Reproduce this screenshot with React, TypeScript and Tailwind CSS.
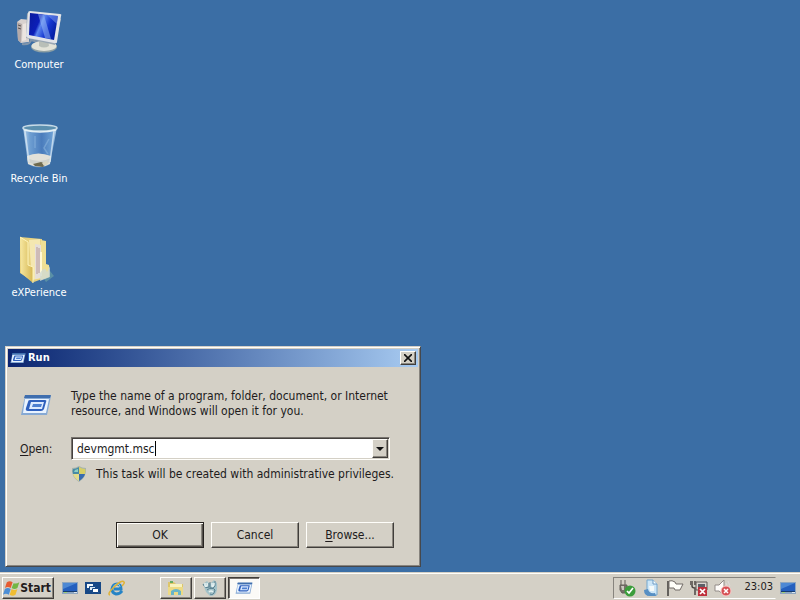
import { useState } from "react";
import type { ReactNode } from "react";

const raised =
  "border border-t-[#fffefa] border-l-[#fffefa] border-r-[#403d3a] border-b-[#403d3a] shadow-[inset_-1px_-1px_0_#8a867e]";

function ComputerIcon() {
  return (
    <svg viewBox="0 0 48 48" className="size-12" aria-hidden="true">
      <defs>
        <linearGradient id="screen" x1="0" y1="0" x2="1" y2="0.4">
          <stop offset="0" stopColor="#0a1a9c" />
          <stop offset="0.4" stopColor="#0c1fb8" />
          <stop offset="0.5" stopColor="#5a84ee" />
          <stop offset="0.75" stopColor="#1436d0" />
          <stop offset="1" stopColor="#0620a8" />
        </linearGradient>
      </defs>
      <path d="M2 14 6 11 16 12 14 34 6 35 3 32z" fill="#d9d2cf" />
      <path d="M2 14 7 16 6 35 3 32z" fill="#b4aaa9" />
      <path d="M8 16 12 15 11 32 7 33z" fill="#ece5e0" />
      <path d="M3 17l3 1M3 20l3 1" stroke="#5c5450" />
      <path d="M7 36q8 1 9-4l7 2q-4 2-5 5" fill="none" stroke="#8195ab" strokeWidth="2" />
      <ellipse cx="29" cy="39" rx="13" ry="5.5" fill="#8ea0a4" />
      <ellipse cx="29" cy="38" rx="12.5" ry="5" fill="#e3e3d8" />
      <path d="M24 32h9l1 6q-5 3-10 0z" fill="#b9bfb8" />
      <path d="M14 6 12 5 11 30 40 37 46 11z" fill="#9aa7b4" />
      <path d="M13 5Q13 3 15 3L45 6Q47 6 46 8L42 34Q42 36 39 35L13 30Q11 29 11 28z" fill="#e2e4e8" />
      <path d="M15 5 43 8 39 32 14 27z" fill="url(#screen)" />
      <path d="M23 6 29 7 36 31 30 30z" fill="#9bc0fa" opacity="0.5" />
      <path d="M32 7 43 8 42 16z" fill="#7fa0f0" opacity="0.5" />
    </svg>
  );
}

function RecycleIcon() {
  return (
    <svg viewBox="0 0 48 48" className="size-12" aria-hidden="true">
      <defs>
        <linearGradient id="bin" x1="0" y1="0" x2="1" y2="0">
          <stop offset="0" stopColor="#b5d2ec" />
          <stop offset="0.2" stopColor="#6f9fd2" />
          <stop offset="0.55" stopColor="#4a7cbc" />
          <stop offset="0.85" stopColor="#6a9dd2" />
          <stop offset="1" stopColor="#b8d3e8" />
        </linearGradient>
      </defs>
      <path d="M8 5 13 42Q25 49 35 42L42 5z" fill="url(#bin)" />
      <path d="M12 34Q23 29 36 34L35 42Q25 48 13 42z" fill="#e3e1d9" />
      <path d="M12 36q12 6 24 0l-1 4q-10 6-22 0z" fill="#cfd2cd" />
      <path d="M18 42l8-2 5 2-3 3-8-1z" fill="#6f6b50" />
      <path d="M27 41l5-2 1 3-4 2z" fill="#d9d6c1" />
      <path d="M34 17 29 26 33 32M20 14v12" fill="none" stroke="#88b2dc" strokeWidth="1.5" opacity="0.6" />
      <path d="M10 9 14 40M39 9 35 40" fill="none" stroke="#e0edf5" strokeWidth="1.5" opacity="0.7" />
      <ellipse cx="25" cy="6" rx="17" ry="3" fill="#5b8fae" stroke="#c8dbe7" strokeWidth="1.5" />
      <path d="M9 8q16 4 32 0" fill="none" stroke="#e4f0f5" strokeWidth="1.5" />
    </svg>
  );
}

function FolderIcon() {
  return (
    <svg viewBox="0 0 48 48" className="size-12" aria-hidden="true">
      <defs>
        <linearGradient id="folder" x1="0" y1="0" x2="1" y2="0">
          <stop offset="0" stopColor="#f7e8a2" />
          <stop offset="1" stopColor="#d5b652" />
        </linearGradient>
      </defs>
      <path d="M27 40 35 35 39 40 31 46z" fill="#6fa6a7" opacity="0.6" />
      <path d="M5 1 27 3 27 43 19 46 5 37z" fill="#e7d17e" />
      <path d="M14 4 25 3 27 42 17 44z" fill="#f4e7b1" />
      <path d="M20 8 26 9 29 41 20 43z" fill="#e5ded9" />
      <path d="M22 11v27M24 12v25" stroke="#b69896" />
      <path d="M26 4 31 5 31 28 34 29 34 41 26 44z" fill="#eedf94" />
      <path d="M26 16v24" stroke="#fff8d5" strokeWidth="2" />
      <path d="M5 1 13 6 13 29 18 31 18 47 6 37z" fill="url(#folder)" />
      <path d="M5 1 13 6 13 29 18 31 18 47" fill="none" stroke="#fff5bb" />
      <path d="M25 37q5-8 7-1l3-6v11l-10 4z" fill="#cfdad2" opacity="0.8" />
    </svg>
  );
}

function RunIcon({ className }: { className: string }) {
  return (
    <svg viewBox="0 0 32 24" className={className} aria-hidden="true">
      <path d="M5 3H31L27 22H1z" fill="#86a9d4" />
      <path d="M5 2H31L30 5H4z" fill="#3f6eae" />
      <path d="M5 6H29L26 20H3z" fill="#e9f3ff" />
      <path d="M10 7H25Q27 7 26 9L24 16Q23 18 21 18H8Q5 18 6 15L8 9Q8 7 10 7z" fill="#2f60bd" />
      <path d="M11 9H24L22 16H9z" fill="#dceaff" />
      <path d="M13 11H22L21 14H12z" fill="#4d7fd0" />
    </svg>
  );
}

function ShieldIcon() {
  return (
    <svg viewBox="0 0 16 16" className="size-4 shrink-0" aria-hidden="true">
      <path d="M8 0Q11 2 15 2Q16 11 8 16Q0 11 1 2Q5 2 8 0z" fill="#a8b4ac" />
      <path d="M8 1v7H2Q1 5 2 3Q5 3 8 1z" fill="#488ba5" />
      <path d="M8 1Q11 3 14 3Q15 5 14 8H8z" fill="#d8cf65" />
      <path d="M2 8h6v7Q3 12 2 8z" fill="#e3dc8c" />
      <path d="M8 8h6Q13 12 8 15z" fill="#386bb0" />
      <path d="M4 4l3-1v3H3z" fill="#8ed0c4" />
    </svg>
  );
}

function StartFlag() {
  return (
    <svg viewBox="0 0 18 16" className="h-4 w-[18px]" aria-hidden="true">
      <path d="M4 2Q7 0 10 2L8 8Q5 6 2 8z" fill="#e65c31" />
      <path d="M11 3Q14 4 17 2L15 8Q12 10 9 8z" fill="#73b644" />
      <path d="M2 9Q5 7 8 9L6 15Q3 13 0 15z" fill="#4c8ed5" />
      <path d="M9 9Q12 11 15 9L13 15Q10 17 7 15z" fill="#f0bd33" />
    </svg>
  );
}

function DesktopGlyph() {
  return (
    <svg viewBox="0 0 16 14" className="h-[14px] w-4" aria-hidden="true">
      <path d="M0 1h16v12H0z" fill="#8ea6c0" />
      <path d="M1 2h14v8H1z" fill="#245fbe" />
      <path d="M1 2h14L1 8z" fill="#4d88d4" />
      <path d="M1 10h14v1H1z" fill="#173c70" />
      <path d="M2 11h3v1H2z" fill="#9cce75" />
      <path d="M12 11h3v1h-3z" fill="#dce7ef" />
    </svg>
  );
}

function SwitcherGlyph() {
  return (
    <svg viewBox="0 0 16 14" className="h-[14px] w-4" aria-hidden="true">
      <path d="M0 1h16v12H0z" fill="#174886" />
      <path d="M2 3h6v4H2z" fill="#f3f8fb" />
      <path d="M4.5 5.5h6v4h-6z" fill="#d9e8f2" stroke="#174886" />
      <path d="M7.5 7.5h6v4h-6z" fill="#fff" stroke="#174886" />
    </svg>
  );
}

function ExplorerEGlyph() {
  return (
    <svg viewBox="0 0 18 16" className="h-4 w-[18px]" aria-hidden="true">
      <path d="M14 11Q12 14 8 14Q4 13 4 9Q5 4 9 4Q13 4 13 9H6" fill="none" stroke="#2683c6" strokeWidth="3" />
      <path d="M5 8Q6 4 9 4Q12 4 12 7" fill="none" stroke="#8cd3ef" />
      <path d="M2 15Q-1 14 5 8Q14-1 16 2Q17 3 14 6" fill="none" stroke="#dfb236" strokeWidth="1.5" />
    </svg>
  );
}

function FilesGlyph() {
  return (
    <svg viewBox="0 0 18 16" className="h-4 w-[18px]" aria-hidden="true">
      <path d="M1 2h6l2 2h7v11H1z" fill="#ddc66b" />
      <path d="M3 4h12v8H3z" fill="#f8f2bf" />
      <path d="M1 7h15v8H1z" fill="#edda84" />
      <path d="M4 11Q9 7 14 11V15H11V12H7V15H4z" fill="#69b5c9" />
      <path d="M3 2h3" stroke="#63aa62" strokeWidth="2" />
    </svg>
  );
}

function ToolsGlyph() {
  return (
    <svg viewBox="0 0 18 18" className="size-[18px]" aria-hidden="true">
      <path d="M2 5 6 2 9 5 13 1 16 4V11Q15 17 9 17L5 13z" fill="#a3c2c8" />
      <path d="M2 5Q4 10 8 8V4M9 3v6q3 2 5-2V2M6 11q5-4 8 0-1 6-5 4" fill="none" stroke="#587f90" />
      <path d="M4 4v3q3 1 2-3M11 4v3q2 1 2-3M8 13q2-2 4 0" fill="none" stroke="#e6f2f2" strokeWidth="1.5" />
    </svg>
  );
}

function TrayGlyph({ kind }: { kind: "safe" | "page" | "flag" | "network" | "sound" }) {
  return (
    <svg viewBox="0 0 18 18" className="block size-[18px]" aria-hidden="true">
      {kind === "safe" && (
        <>
          <path d="M3 1v5M7 1v5M2 6h7v5l-2 3H4l-2-3z" fill="#77706a" stroke="#65605b" />
          <path d="M3 7h3v4H4z" fill="#c9c8bf" />
          <circle cx="12" cy="12" r="5.5" fill="#3b9d3b" />
          <path d="M9 12l2 2 4-5" fill="none" stroke="#fff" strokeWidth="1.7" />
        </>
      )}
      {kind === "page" && (
        <>
          <path d="M5 1h6l4 4v11H5z" fill="#cde6f7" stroke="#75a7ce" />
          <path d="M11 1v4h4" fill="#f8ffff" stroke="#6d9ac4" />
          <path d="M2 11Q2 17 8 17H14L13 14Q7 15 6 10z" fill="#578fc3" />
          <path d="M7 7h5v5H8z" fill="#f5fafa" />
        </>
      )}
      {kind === "flag" && (
        <>
          <path d="M2 2v15" stroke="#64615d" strokeWidth="2" />
          <path d="M3 2Q6 1 9 3L10 5 17 5 14 11H9L8 9H3z" fill="#fffef8" stroke="#716b66" />
        </>
      )}
      {kind === "network" && (
        <>
          <path d="M2 2v5q0 2 3 2v7M5 2v4M0 2v4" fill="none" stroke="#4c4644" strokeWidth="1.5" />
          <path d="M6 3h11v8H6z" fill="#d9d5d1" stroke="#5c5653" />
          <path d="M8 5h7v4H8z" fill="#5c5f67" />
          <path d="M8 8h9v9H8z" fill="#bf303c" />
          <path d="M10 10l5 5m0-5-5 5" stroke="#fff" strokeWidth="1.7" />
        </>
      )}
      {kind === "sound" && (
        <>
          <path d="M1 6h4l5-5v15l-5-4H1z" fill="#fffdfa" stroke="#928b87" />
          <path d="M12 4q3 4 0 8M14 2q3 5 1 8" fill="none" stroke="#dedada" />
          <circle cx="12" cy="12" r="5" fill="#d65054" stroke="#f8cbc8" />
          <path d="M10 10l4 4m0-4-4 4" stroke="#fff" strokeWidth="1.5" />
        </>
      )}
    </svg>
  );
}

function DesktopItem({ icon, label }: { icon: ReactNode; label: string }) {
  return (
    <button className="flex h-[114px] w-full flex-col items-center gap-px text-[11px] leading-4 text-white">
      {icon}
      <span>{label}</span>
    </button>
  );
}

function DialogButton({ children, primary = false }: { children: ReactNode; primary?: boolean }) {
  return (
    <button
      type={primary ? "submit" : "button"}
      className={`h-[26px] w-[88px] text-center ${primary ? "border border-[#25211e] shadow-[inset_1px_1px_0_#fffefa,inset_-1px_-1px_0_#55514c,inset_-2px_-2px_0_#8a867e]" : raised}`}
    >
      {children}
    </button>
  );
}

function RunDialog() {
  const [command, setCommand] = useState("devmgmt.msc");
  return (
    <section
      role="dialog"
      aria-labelledby="run-title"
      className="absolute bottom-[5px] left-[5px] w-[416px] border border-t-[#d4d0c8] border-l-[#d4d0c8] border-r-[#45484d] border-b-[#45484d] bg-[#d4d0c6] p-0.5 text-xs text-[#211b1c] shadow-[inset_1px_1px_0_#fffefa,inset_-1px_-1px_0_#87847e]"
    >
      <header className="flex h-[18px] items-center gap-0.5 bg-linear-to-r from-[#0c2470] to-[#a8cbf1] px-0.5">
        <RunIcon className="h-3 w-4" />
        <h1 id="run-title" className="flex-1 text-[11px] font-bold text-white">
          Run
        </h1>
        <button
          aria-label="Close"
          className={`grid h-[14px] w-4 place-items-center bg-[#d4d0c6] ${raised}`}
        >
          <svg viewBox="0 0 8 8" className="size-2" aria-hidden="true">
            <path d="M0 0l8 8M8 0 0 8" stroke="#111" strokeWidth="1.6" />
          </svg>
        </button>
      </header>
      <form onSubmit={(event) => event.preventDefault()} className="pt-[22px] pb-4 pl-3">
        <div className="flex">
          <div className="w-[51px] shrink-0 pt-1">
            <RunIcon className="h-6 w-8" />
          </div>
          <p className="leading-[15px]">
            Type the name of a program, folder, document, or Internet
            <br />
            resource, and Windows will open it for you.
          </p>
        </div>
        <div className="mt-[18px] flex items-center">
          <label htmlFor="command" className="w-[51px] shrink-0">
            <u className="underline-offset-2">O</u>pen:
          </label>
          <div className="flex h-[23px] w-[319px] items-center border border-t-[#77736e] border-r-[#fffefa] border-b-[#fffefa] border-l-[#77736e] bg-white pl-[5px] shadow-[inset_1px_1px_0_#45413e,inset_-1px_-1px_0_#d4d0c6]">
            <input
              id="command"
              value={command}
              onChange={(event) => setCommand(event.target.value)}
              className="field-sizing-content bg-transparent caret-transparent outline-none"
            />
            <span className="h-[15px] w-px bg-black" />
            <button
              type="button"
              aria-label="Show recent commands"
              className={`mr-px ml-auto grid h-[19px] w-4 place-items-center bg-[#d4d0c6] ${raised}`}
            >
              <svg viewBox="0 0 8 4" className="h-1 w-2" aria-hidden="true">
                <path d="M0 0h8L4 4z" fill="#111" />
              </svg>
            </button>
          </div>
        </div>
        <div className="mt-1.5 flex items-center gap-[9px] pl-[51px]">
          <ShieldIcon />
          <p>This task will be created with administrative privileges.</p>
        </div>
        <div className="mt-10 flex justify-end gap-[7px] pr-6">
          <DialogButton primary>OK</DialogButton>
          <DialogButton>Cancel</DialogButton>
          <DialogButton>
            <u className="underline-offset-2">B</u>rowse...
          </DialogButton>
        </div>
      </form>
    </section>
  );
}

function Taskbar() {
  const pressed =
    "border border-t-[#403d3a] border-l-[#403d3a] border-r-white border-b-white bg-[#fbfaf7] shadow-[inset_1px_1px_0_#77736e]";
  return (
    <footer className="flex h-7 items-center border-t border-[#d4d0c6] bg-[#d4d0c6] pt-0.5 pr-1 pl-0.5 text-[#211b1c] shadow-[inset_0_1px_0_#fffefa]">
      <button className={`flex h-[22px] w-[52px] items-center pr-0.5 text-xs font-bold ${raised}`}>
        <StartFlag />
        Start
      </button>
      <nav aria-label="Quick launch" className="flex items-center gap-[7px] pl-2">
        <button aria-label="Show desktop"><DesktopGlyph /></button>
        <button aria-label="Switch windows"><SwitcherGlyph /></button>
        <button aria-label="Internet browser"><ExplorerEGlyph /></button>
      </nav>
      <div className="ml-[34px] flex gap-0.5">
        <button aria-label="File explorer" className={`grid h-[22px] w-8 place-items-center ${raised}`}>
          <FilesGlyph />
        </button>
        <button aria-label="System tools" className={`grid h-[22px] w-8 place-items-center ${raised}`}>
          <ToolsGlyph />
        </button>
        <button aria-label="Run" className={`grid h-[22px] w-8 place-items-center ${pressed}`}>
          <RunIcon className="h-[14px] w-[18px]" />
        </button>
      </div>
      <div className="ml-auto flex h-[22px] items-center gap-1.5 border border-t-[#87847e] border-r-transparent border-b-white border-l-[#87847e] pr-0.5 pl-1">
        <button aria-label="Safely remove hardware"><TrayGlyph kind="safe" /></button>
        <button aria-label="Clipboard"><TrayGlyph kind="page" /></button>
        <button aria-label="Notifications"><TrayGlyph kind="flag" /></button>
        <button aria-label="Network disconnected"><TrayGlyph kind="network" /></button>
        <button aria-label="Sound muted"><TrayGlyph kind="sound" /></button>
        <time className="pl-1.5 text-[11px]">23:03</time>
      </div>
      <button aria-label="Desktop" className="pl-1"><DesktopGlyph /></button>
    </footer>
  );
}

export default function App() {
  return (
    <div className="flex h-screen flex-col overflow-hidden bg-[#3b6ea5] [font-family:'DejaVu_Sans_Condensed','DejaVu_Sans',sans-serif]">
      <main className="relative min-h-0 flex-1">
        <nav aria-label="Desktop" className="w-[78px] pt-2">
          <DesktopItem icon={<ComputerIcon />} label="Computer" />
          <DesktopItem icon={<RecycleIcon />} label="Recycle Bin" />
          <DesktopItem icon={<FolderIcon />} label="eXPerience" />
        </nav>
        <RunDialog />
      </main>
      <Taskbar />
    </div>
  );
}
